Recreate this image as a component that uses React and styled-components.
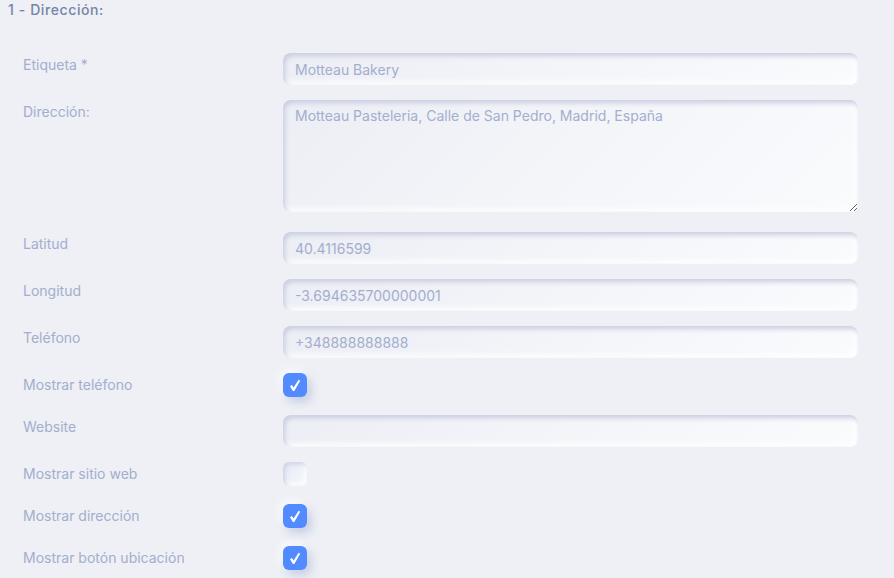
import styled, { createGlobalStyle } from "styled-components";

const Global = createGlobalStyle`
    body {
        margin: 0;
        background: #eef0f5;
        font-family: Inter, "Noto Sans", sans-serif;
    }
`;

const Page = styled.div`
    padding: 1px 8px 0 8px;
    height: 578px;
    overflow: hidden;
`;

const Title = styled.h3`
    margin: 0;
    font-size: 14px;
    line-height: 18px;
    font-weight: 500;
    color: #7584a8;
    letter-spacing: 0.6px;
`;

const Form = styled.div`
    display: grid;
    grid-template-columns: 260px 575px;
    row-gap: 15px;
    padding: 34px 0 0 15px;
`;

const Label = styled.label`
    font-size: 14px;
    line-height: 24px;
    color: #a3aece;
`;

const fieldLook = `
    box-sizing: border-box;
    width: 100%;
    border: none;
    outline: none;
    border-radius: 8px;
    padding: 0 12px;
    font-family: Inter, "Noto Sans", sans-serif;
    font-size: 14px;
    color: #a3aece;
    background: linear-gradient(135deg, #eceef5 0%, #f4f5f9 50%, #fafbfd 100%);
    box-shadow: inset 2px 3px 5px #c8cde1, inset -3px -3px 6px #ffffff;
`;

const Input = styled.input`
    ${fieldLook}
    height: 32px;
`;

const TextArea = styled.textarea`
    ${fieldLook}
    height: 112px;
    padding-top: 7px;
    margin-bottom: 5px;
    resize: vertical;
    display: block;
`;

const CheckCell = styled.div`
    height: 27px;
`;

const Box = styled.div`
    width: 24px;
    height: 24px;
    border-radius: 6px;
    display: flex;
    align-items: center;
    justify-content: center;
    background: ${p => (p.$on ? "#528bff" : "linear-gradient(135deg, #e4e8f3, #f8f9fc)")};
    box-shadow: ${p => (p.$on
        ? "4px 5px 10px rgba(150, 165, 205, 0.45), -3px -3px 8px rgba(255,255,255,0.8)"
        : "inset 2px 2px 4px #cdd3e6, inset -2px -2px 4px #ffffff")};
`;

function Check({ on }) {
    return (
        <CheckCell>
            <Box $on={on}>
                {on && (
                    <svg width="12" height="13" viewBox="0 0 12 13">
                        <path d="M1 7.2 L2.9 5.9 L4.6 8.4 L9.6 0.8 L11.2 1.8 L5.3 12 L3.9 12 Z" fill="#fff" />
                    </svg>
                )}
            </Box>
        </CheckCell>
    );
}

export default function App() {
    return (
        <Page>
            <Global />
            <Title>1 - Dirección:</Title>
            <Form>
                <Label>Etiqueta *</Label>
                <Input defaultValue="Motteau Bakery" />

                <Label>Dirección:</Label>
                <TextArea defaultValue="Motteau Pasteleria, Calle de San Pedro, Madrid, España" />

                <Label>Latitud</Label>
                <Input defaultValue="40.4116599" />

                <Label>Longitud</Label>
                <Input defaultValue="-3.694635700000001" />

                <Label>Teléfono</Label>
                <Input defaultValue="+348888888888" />

                <Label>Mostrar teléfono</Label>
                <Check on />

                <Label>Website</Label>
                <Input defaultValue="" />

                <Label>Mostrar sitio web</Label>
                <Check />

                <Label>Mostrar dirección</Label>
                <Check on />

                <Label>Mostrar botón ubicación</Label>
                <Check on />
            </Form>
        </Page>
    );
}
